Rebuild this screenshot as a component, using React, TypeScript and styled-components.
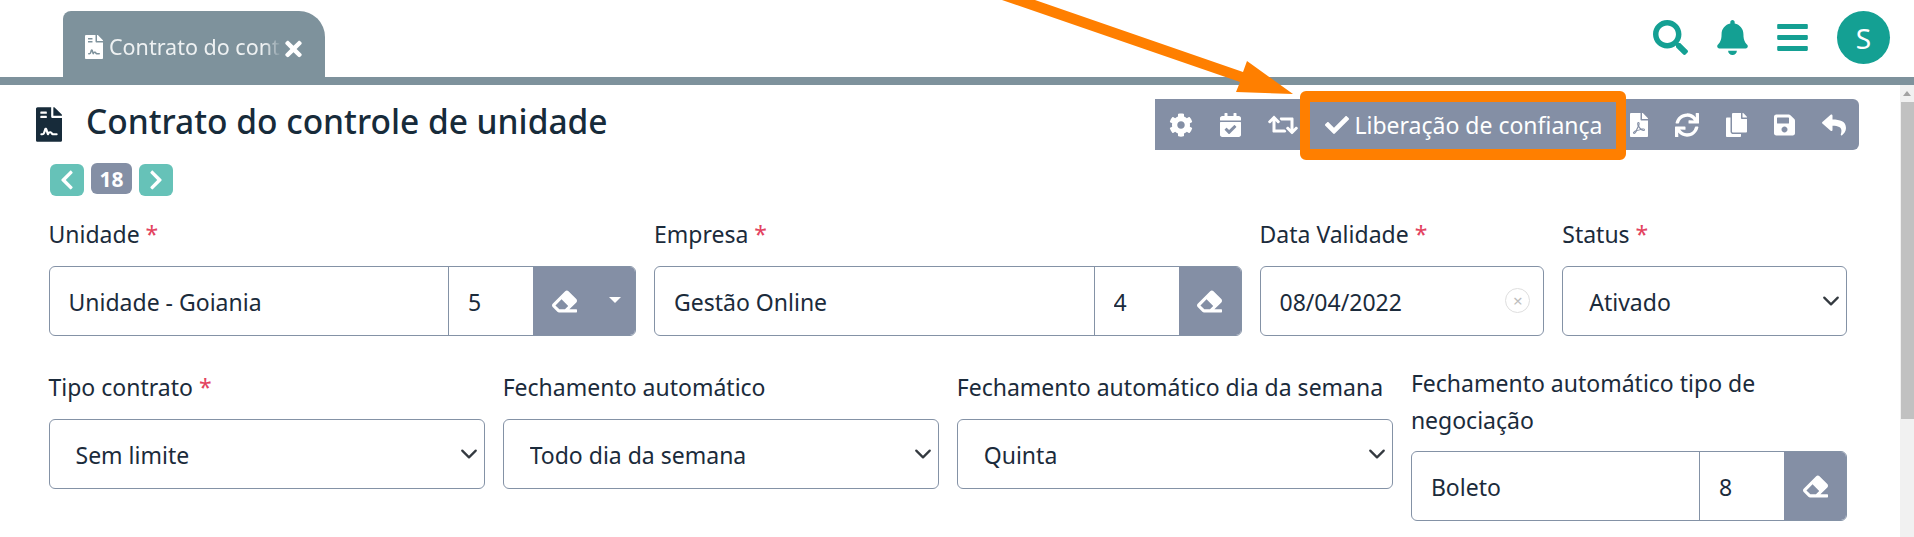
import React from 'react';
import styled, { createGlobalStyle } from 'styled-components';
import {
  FaBars,
  FaBell,
  FaCalendarCheck,
  FaCheck,
  FaChevronLeft,
  FaChevronRight,
  FaCog,
  FaCopy,
  FaEraser,
  FaFileContract,
  FaFilePdf,
  FaReply,
  FaRetweet,
  FaSave,
  FaSearch,
  FaSync,
  FaTimes,
} from 'react-icons/fa';

const SELECT_CHEVRON =
  "data:image/svg+xml,%3Csvg xmlns='http://www.w3.org/2000/svg' viewBox='0 0 16 16'%3E%3Cpath fill='none' stroke='%23343a40' stroke-linecap='round' stroke-linejoin='round' stroke-width='2' d='M2 5l6 6 6-6'/%3E%3C/svg%3E";

const GlobalStyle = createGlobalStyle`
  html, body {
    height: 100%;
    margin: 0;
    overflow: hidden;
    background: #fff;
  }

  #root {
    height: 100%;
  }

  * {
    box-sizing: border-box;
  }
`;

const Page = styled.div`
  position: relative;
  display: flex;
  flex-direction: column;
  height: 100%;
  font-family: 'Noto Sans', 'Open Sans', sans-serif;
  color: #1b2b3b;
`;

// font awesome glyphs are not square, react-icons boxes them 1em x 1em
const Glyph = styled.span<{ $w: number; $h: number }>`
  display: flex;
  flex: none;
  width: ${(p) => p.$w}px;
  height: ${(p) => p.$h}px;

  svg {
    width: 100%;
    height: 100%;
  }
`;

const TopBar = styled.header`
  display: flex;
  flex: none;
  justify-content: space-between;
  height: 85px;
  padding: 0 24px 0 63px;
  border-bottom: 8px solid #7e929c;
`;

const Tab = styled.div`
  display: flex;
  align-items: center;
  align-self: flex-end;
  width: 262px;
  height: 66px;
  padding: 5px 0 0 22px;
  gap: 6px;
  border-radius: 8px 26px 0 0;
  background: #7e929c;
  color: #fff;
`;

const TabTitle = styled.span`
  flex: none;
  width: 176px;
  margin-right: -6px;
  overflow: hidden;
  white-space: nowrap;
  font-size: 21.5px;
  color: #eef1f2;
  mask-image: linear-gradient(to right, #000 156px, transparent 172px);
`;

const TabClose = styled.span`
  display: flex;
  margin-top: 5px;
`;

const TopActions = styled.div`
  display: flex;
  align-items: center;
  height: 53px;
  margin-top: 11px;
  gap: 29px;
  color: #14a093;
`;

const Avatar = styled.div`
  display: flex;
  align-items: center;
  justify-content: center;
  width: 53px;
  height: 53px;
  border-radius: 50%;
  background: #14a093;
  color: #fff;
  font-size: 28px;
`;

const Content = styled.main`
  display: flex;
  flex: 1;
  min-height: 0;
  overflow: hidden;
`;

const Sheet = styled.div`
  flex: 1;
  min-width: 0;
  padding: 14px 41px 0 36px;
`;

const ScrollTrack = styled.div`
  display: flex;
  flex: none;
  flex-direction: column;
  align-items: flex-end;
  width: 14px;
  background: #f1f1f1;
`;

const ScrollArrow = styled.span`
  width: 0;
  height: 0;
  margin: 6px 3px 6px 0;
  border-right: 4px solid transparent;
  border-bottom: 5px solid #a3a3a3;
  border-left: 4px solid transparent;
`;

const ScrollThumb = styled.div`
  width: 13px;
  height: 317px;
  background: #c1c1c1;
`;

const TitleRow = styled.div`
  display: flex;
  align-items: center;
  justify-content: space-between;
  height: 51px;
`;

const Heading = styled.div`
  display: flex;
  align-items: center;
  gap: 24px;
  color: #172b3a;
`;

const Title = styled.h1`
  margin: 0 0 8px;
  font-size: 33.5px;
  font-weight: 500;
`;

const Toolbar = styled.div`
  display: flex;
  align-items: stretch;
  height: 51px;
  border-radius: 0 6px 6px 0;
  background: #848fa5;
`;

const ToolButton = styled.button`
  position: relative;
  display: flex;
  align-items: center;
  padding: 0 13.5px;
  gap: 5.5px;
  border: none;
  outline: none;
  background: transparent;
  color: #fff;
  font-family: inherit;
  font-size: 23px;
  white-space: nowrap;
`;

const HighlightedButton = styled(ToolButton)`
  &::after {
    content: '';
    position: absolute;
    inset: -8px -10px -10px -11.5px;
    border: solid #ff7f00;
    border-width: 11px 10px;
    border-radius: 6px;
    pointer-events: none;
  }
`;

const Pager = styled.div`
  display: flex;
  align-items: flex-start;
  height: 32px;
  margin: 14px 0 0 14px;
  gap: 7px;
`;

const PagerArrow = styled.button`
  display: flex;
  align-items: center;
  justify-content: center;
  width: 34px;
  height: 32px;
  padding: 0;
  border: none;
  border-radius: 6px;
  background: #66c2b8;
  color: #fff;
  font-size: 22px;
`;

const PagerCount = styled.span`
  display: flex;
  align-items: center;
  justify-content: center;
  width: 41px;
  height: 31px;
  margin-top: -1px;
  border-radius: 6px;
  background: #848fa5;
  color: #fff;
  font-size: 21px;
  font-weight: 700;
`;

const Form = styled.form`
  display: grid;
  grid-template-columns: repeat(12, 1fr);
  align-items: start;
  margin: 19.5px 12px 0 12.5px;
  column-gap: 18px;
  row-gap: 32.5px;
`;

const Label = styled.label`
  display: block;
  margin-bottom: 13.5px;
  font-size: 23px;
  line-height: 37px;
  color: #1b2b3b;

  em {
    font-style: normal;
    color: #e3435f;
  }
`;

const Field = styled.div<{ $span: number; $wrapped?: boolean }>`
  grid-column: span ${(p) => p.$span};
  margin-top: ${(p) => (p.$wrapped ? '-4px' : '0')};

  ${Label} {
    margin-bottom: ${(p) => (p.$wrapped ? '12.5px' : '13.5px')};
  }
`;

const Control = styled.div`
  position: relative;
  display: flex;
  height: 70px;
  overflow: hidden;
  border: 1px solid #8492a6;
  border-radius: 6px;
  background: #fff;
`;

const TextInput = styled.input`
  flex: 1;
  min-width: 0;
  height: 100%;
  padding: 2px 19px 0;
  border: none;
  outline: none;
  background: transparent;
  color: #1b2b3b;
  font-family: inherit;
  font-size: 23px;
`;

const CodeInput = styled(TextInput)`
  flex: none;
  width: 85px;
  border-left: 1px solid #8492a6;
`;

const ClearButton = styled.button`
  display: flex;
  flex: none;
  align-items: center;
  justify-content: center;
  width: 62px;
  margin: -1px 0;
  padding: 0;
  border: none;
  background: #848fa5;
  color: #fff;
  font-size: 25px;
`;

const CaretButton = styled(ClearButton)`
  width: 40px;
  padding-bottom: 2px;

  &::before {
    content: '';
    border-top: 6px solid #fff;
    border-right: 6px solid transparent;
    border-left: 6px solid transparent;
  }
`;

const DateClear = styled.span`
  position: absolute;
  top: 21px;
  right: 13px;
  display: flex;
  align-items: center;
  justify-content: center;
  width: 25px;
  height: 25px;
  border: 1px solid #dedede;
  border-radius: 50%;
  color: #bdbdbd;
  font-size: 17px;
  line-height: 1;
`;

const Select = styled.select`
  display: block;
  width: 100%;
  height: 70px;
  padding: 2px 0 0 26px;
  appearance: none;
  border: 1px solid #8492a6;
  border-radius: 6px;
  outline: none;
  background: #fff url("${SELECT_CHEVRON}") no-repeat right 6px center / 18px 18px;
  color: #1b2b3b;
  font-family: inherit;
  font-size: 23px;
`;

const Arrow = styled.svg`
  position: absolute;
  top: 0;
  left: 1000px;
  pointer-events: none;
`;

const Required = () => <em> *</em>;

interface LookupProps {
  text: string;
  code: string;
  caret?: boolean;
}

const Lookup: React.FC<LookupProps> = ({ text, code, caret }) => (
  <Control>
    <TextInput readOnly value={text} />
    <CodeInput readOnly value={code} />
    <ClearButton type="button">
      <FaEraser />
    </ClearButton>
    {caret && <CaretButton type="button" />}
  </Control>
);

const Choice: React.FC<{ value: string }> = ({ value }) => (
  <Select defaultValue={value}>
    <option>{value}</option>
  </Select>
);

const App: React.FC = () => (
  <Page>
    <GlobalStyle />
    <TopBar>
      <Tab>
        <Glyph $w={18} $h={24}><FaFileContract /></Glyph>
        <TabTitle>Contrato do controle de unidade</TabTitle>
        <TabClose>
          <Glyph $w={17} $h={24}><FaTimes /></Glyph>
        </TabClose>
      </Tab>
      <TopActions>
        <Glyph $w={35} $h={35}><FaSearch /></Glyph>
        <Glyph $w={31} $h={35}><FaBell /></Glyph>
        <Glyph $w={31} $h={35}><FaBars /></Glyph>
        <Avatar>S</Avatar>
      </TopActions>
    </TopBar>

    <Content>
      <Sheet>
        <TitleRow>
          <Heading>
            <Glyph $w={26} $h={35}><FaFileContract /></Glyph>
            <Title>Contrato do controle de unidade</Title>
          </Heading>
          <Toolbar>
            <ToolButton><Glyph $w={24} $h={24}><FaCog /></Glyph></ToolButton>
            <ToolButton><Glyph $w={21} $h={24}><FaCalendarCheck /></Glyph></ToolButton>
            <ToolButton><Glyph $w={30} $h={24}><FaRetweet /></Glyph></ToolButton>
            <HighlightedButton>
              <Glyph $w={24} $h={24}><FaCheck /></Glyph>
              Liberação de confiança
            </HighlightedButton>
            <ToolButton><Glyph $w={18} $h={24}><FaFilePdf /></Glyph></ToolButton>
            <ToolButton><Glyph $w={24} $h={24}><FaSync /></Glyph></ToolButton>
            <ToolButton><Glyph $w={21} $h={24}><FaCopy /></Glyph></ToolButton>
            <ToolButton><Glyph $w={21} $h={24}><FaSave /></Glyph></ToolButton>
            <ToolButton><Glyph $w={24} $h={24}><FaReply /></Glyph></ToolButton>
          </Toolbar>
        </TitleRow>

        <Pager>
          <PagerArrow><FaChevronLeft /></PagerArrow>
          <PagerCount>18</PagerCount>
          <PagerArrow><FaChevronRight /></PagerArrow>
        </Pager>

        <Form>
          <Field $span={4}>
            <Label>Unidade<Required /></Label>
            <Lookup text="Unidade - Goiania" code="5" caret />
          </Field>
          <Field $span={4}>
            <Label>Empresa<Required /></Label>
            <Lookup text="Gestão Online" code="4" />
          </Field>
          <Field $span={2}>
            <Label>Data Validade<Required /></Label>
            <Control>
              <TextInput readOnly value="08/04/2022" />
              <DateClear>×</DateClear>
            </Control>
          </Field>
          <Field $span={2}>
            <Label>Status<Required /></Label>
            <Choice value="Ativado" />
          </Field>

          <Field $span={3}>
            <Label>Tipo contrato<Required /></Label>
            <Choice value="Sem limite" />
          </Field>
          <Field $span={3}>
            <Label>Fechamento automático</Label>
            <Choice value="Todo dia da semana" />
          </Field>
          <Field $span={3}>
            <Label>Fechamento automático dia da semana</Label>
            <Choice value="Quinta" />
          </Field>
          <Field $span={3} $wrapped>
            <Label>Fechamento automático tipo de negociação</Label>
            <Lookup text="Boleto" code="8" />
          </Field>
        </Form>
      </Sheet>
      <ScrollTrack>
        <ScrollArrow />
        <ScrollThumb />
      </ScrollTrack>
    </Content>

    <Arrow width="300" height="100" viewBox="1000 0 300 100">
      <polygon
        points="1002,0 1035,0 1243,72 1247,61 1293,94 1236,92 1240,82"
        fill="#ff7f00"
      />
    </Arrow>
  </Page>
);

export default App;
